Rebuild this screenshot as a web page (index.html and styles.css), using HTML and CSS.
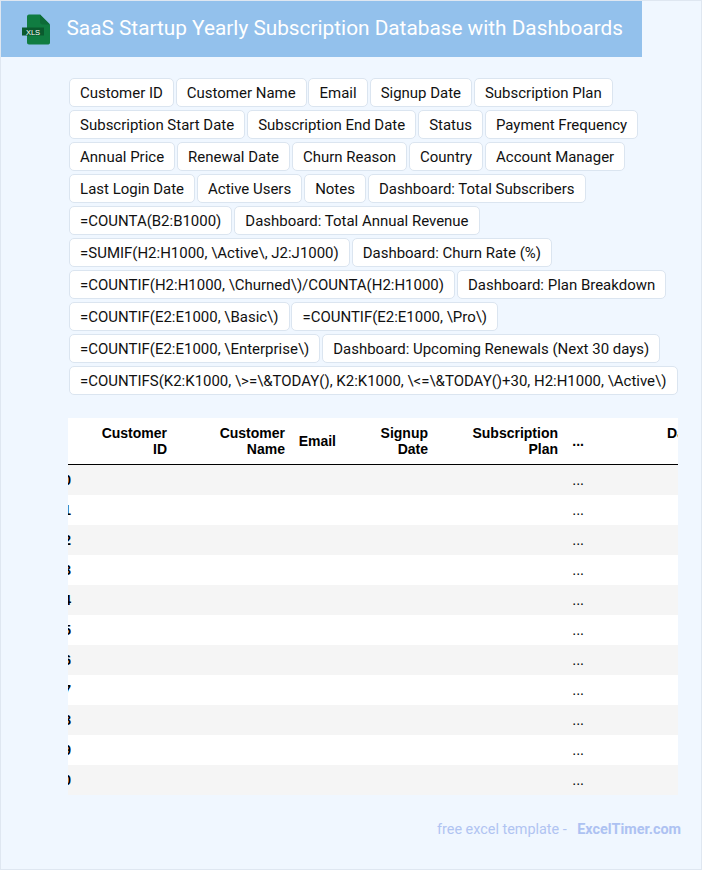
FILE: index.html
```html
<!DOCTYPE html>
<html lang="en">
<head>
<meta charset="utf-8">
<title>SaaS Startup Yearly Subscription Database with Dashboards</title>
<link rel="stylesheet" href="styles.css">
</head>
<body>
<div class="page">
  <header class="banner">
    <svg class="file-icon" viewBox="0 0 30 32" width="30" height="32" aria-hidden="true">
      <path d="M6 2.500C6 1.500 6.800 .5 8 .5H19L29 10.500V28.500C29 30 28 30.500 26.500 30.500H8C6.800 30.500 6 29.500 6 28.500Z" fill="#107c41"/>
      <path d="M19 .5V8C19 9.500 20 10.500 21.500 10.500H29Z" fill="#0d6b38"/>
      <rect x="1" y="13.500" width="22" height="8" fill="#0a5a2e"/>
      <text x="12" y="20.500" class="file-icon-text" text-anchor="middle">XLS</text>
    </svg>
    <h1 class="title">SaaS Startup Yearly Subscription Database with Dashboards</h1>
  </header>

  <ul class="chips">
    <li class="chip">Customer ID</li>
    <li class="chip">Customer Name</li>
    <li class="chip">Email</li>
    <li class="chip">Signup Date</li>
    <li class="chip">Subscription Plan</li>
    <li class="chip">Subscription Start Date</li>
    <li class="chip">Subscription End Date</li>
    <li class="chip">Status</li>
    <li class="chip">Payment Frequency</li>
    <li class="chip">Annual Price</li>
    <li class="chip">Renewal Date</li>
    <li class="chip">Churn Reason</li>
    <li class="chip">Country</li>
    <li class="chip">Account Manager</li>
    <li class="chip">Last Login Date</li>
    <li class="chip">Active Users</li>
    <li class="chip">Notes</li>
    <li class="chip">Dashboard: Total Subscribers</li>
    <li class="chip">=COUNTA(B2:B1000)</li>
    <li class="chip">Dashboard: Total Annual Revenue</li>
    <li class="chip">=SUMIF(H2:H1000, \Active\, J2:J1000)</li>
    <li class="chip">Dashboard: Churn Rate (%)</li>
    <li class="chip">=COUNTIF(H2:H1000, \Churned\)/COUNTA(H2:H1000)</li>
    <li class="chip">Dashboard: Plan Breakdown</li>
    <li class="chip">=COUNTIF(E2:E1000, \Basic\)</li>
    <li class="chip">=COUNTIF(E2:E1000, \Pro\)</li>
    <li class="chip">=COUNTIF(E2:E1000, \Enterprise\)</li>
    <li class="chip">Dashboard: Upcoming Renewals (Next 30 days)</li>
    <li class="chip">=COUNTIFS(K2:K1000, \&gt;=\&amp;TODAY(), K2:K1000, \&lt;=\&amp;TODAY()+30, H2:H1000, \Active\)</li>
  </ul>

  <div class="table-frame">
    <table class="data">
      <colgroup>
        <col class="c-idx"><col class="c-id"><col class="c-name"><col class="c-email"><col class="c-date"><col class="c-plan"><col class="c-more"><col class="c-last">
      </colgroup>
      <thead>
        <tr><th></th><th>Customer<br>ID</th><th>Customer<br>Name</th><th>Email</th><th>Signup<br>Date</th><th>Subscription<br>Plan</th><th>...</th><th>Dashboard: Total Annual<br>Revenue</th></tr>
      </thead>
      <tbody>
        <tr><th>0</th><td></td><td></td><td></td><td></td><td></td><td>...</td><td></td></tr>
        <tr><th>1</th><td></td><td></td><td></td><td></td><td></td><td>...</td><td></td></tr>
        <tr><th>2</th><td></td><td></td><td></td><td></td><td></td><td>...</td><td></td></tr>
        <tr><th>3</th><td></td><td></td><td></td><td></td><td></td><td>...</td><td></td></tr>
        <tr><th>4</th><td></td><td></td><td></td><td></td><td></td><td>...</td><td></td></tr>
        <tr><th>5</th><td></td><td></td><td></td><td></td><td></td><td>...</td><td></td></tr>
        <tr><th>6</th><td></td><td></td><td></td><td></td><td></td><td>...</td><td></td></tr>
        <tr><th>7</th><td></td><td></td><td></td><td></td><td></td><td>...</td><td></td></tr>
        <tr><th>8</th><td></td><td></td><td></td><td></td><td></td><td>...</td><td></td></tr>
        <tr><th>9</th><td></td><td></td><td></td><td></td><td></td><td>...</td><td></td></tr>
        <tr><th>10</th><td></td><td></td><td></td><td></td><td></td><td>...</td><td></td></tr>
      </tbody>
    </table>
  </div>

  <footer class="credit">
    <span>free excel template -</span>
    <a class="credit-link" href="#">ExcelTimer.com</a>
  </footer>
</div>
</body>
</html>
```

FILE: styles.css
```css
* {
  box-sizing: border-box;
}

html,
body {
  margin: 0;
  padding: 0;
}

body {
  font-family: Roboto, "Liberation Sans", sans-serif;
  background: #f0f7ff;
}

.page {
  width: 702px;
  height: 870px;
  border: 1px solid #dfe7f1;
  background: #f0f7ff;
  overflow: hidden;
}

.banner {
  width: 641px;
  height: 56px;
  display: flex;
  align-items: center;
  gap: 15.500px;
  padding-left: 20px;
  background: #93c1ec;
}

.file-icon {
  flex: none;
  margin-top: 1px;
}

.file-icon-text {
  font-family: "Liberation Sans", sans-serif;
  font-size: 7.500px;
  font-weight: 400;
  fill: #fff;
}

.title {
  margin: -2px 0 0;
  font-size: 20.800px;
  font-weight: 400;
  line-height: 28px;
  color: #fff;
  white-space: nowrap;
}

.chips {
  list-style: none;
  margin: 21px 0 0 68px;
  padding: 0;
  width: 612px;
  display: flex;
  flex-wrap: wrap;
  gap: 3px 1.800px;
}

.chip {
  height: 29px;
  padding: 0 10.100px;
  display: flex;
  align-items: center;
  font-size: 14.980px;
  color: #111;
  background: #fff;
  border: 1px solid #dbe5f0;
  border-radius: 5px;
  white-space: nowrap;
}

.table-frame {
  width: 610px;
  margin: 23px 0 0 67px;
  background: #fff;
  overflow: hidden;
}

.data {
  table-layout: fixed;
  width: 791px;
  margin-left: -23px;
  border-collapse: separate;
  border-spacing: 0;
  font-family: "Liberation Sans", Arial, sans-serif;
  font-size: 14px;
  line-height: 16px;
  color: #000;
}

.c-idx { width: 30px; }
.c-id { width: 96px; }
.c-name { width: 118px; }
.c-email { width: 51px; }
.c-date { width: 92px; }
.c-plan { width: 130px; }
.c-more { width: 26px; }
.c-last { width: 248px; }

.data th,
.data td {
  padding: 0 4px;
  text-align: right;
  vertical-align: middle;
}

.data thead th {
  height: 47px;
  border-bottom: 1px solid #000;
}

.data tbody tr {
  height: 30px;
}

.data tbody tr:nth-child(odd) {
  background: #f5f5f5;
}

.data tbody td,
.data tbody th {
  white-space: nowrap;
}

.credit {
  margin-top: 24px;
  margin-right: 20px;
  display: flex;
  justify-content: flex-end;
  gap: 10.500px;
  font-size: 14.400px;
  line-height: 22px;
  color: #b0c4f2;
}

.credit-link {
  font-weight: 700;
  color: #adc2f2;
  text-decoration: none;
}
```
